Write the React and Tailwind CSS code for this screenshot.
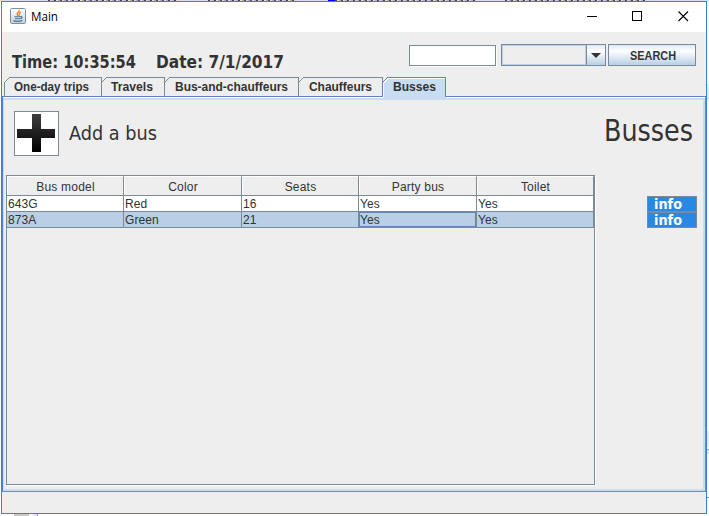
import React from "react";

const ui = "font-['Liberation_Sans',Arial,sans-serif]";
const tahoma = "font-['DejaVu_Sans_Condensed','DejaVu_Sans',sans-serif]";

const tabs = [
  { label: "One-day trips", width: 97, pad: 10, text: 75 },
  { label: "Travels", width: 63, pad: 10, text: 42 },
  { label: "Bus-and-chauffeurs", width: 134, pad: 11, text: 113 },
  { label: "Chauffeurs", width: 84, pad: 11, text: 63 },
  { label: "Busses", width: 64, pad: 11, text: 43, active: true },
];

const columns = [
  { label: "Bus model", width: 117 },
  { label: "Color", width: 118 },
  { label: "Seats", width: 117 },
  { label: "Party bus", width: 118 },
  { label: "Toilet", width: 117 },
];

const rows = [
  ["643G", "Red", "16", "Yes", "Yes"],
  ["873A", "Green", "21", "Yes", "Yes"],
];

// A single line of text fitted to a given advance width.
function Fit({ children, width, size, className = "", bold, fill = "#333333", height }) {
  const h = height || Math.ceil(size * 1.4);
  return (
    <svg width={width + 4} height={h} className={`block shrink-0 overflow-visible ${className}`}>
      <text x="0" y={Math.round(size * 1.05)} fontSize={size} fontWeight={bold ? 700 : 400} fill={fill} textLength={width} lengthAdjust="spacingAndGlyphs">
        {children}
      </text>
    </svg>
  );
}

function Tab({ label, width, pad, text, active }) {
  return (
    <div className="relative h-[20px] shrink-0" style={{ width }}>
      <svg width={width + 1} height="21" className="absolute left-0 top-0 overflow-visible" shapeRendering="crispEdges">
        {active && <path d={`M1 22V7L7 1H${width}V22Z`} fill="#c8ddf2" />}
        {active && <path d={`M1.5 20V6.5L6.5 1.5H${width - 1}`} fill="none" stroke="#ffffff" />}
        <path d={`M0.5 19V5.5L5.5 0.5H${width + 0.5 - (active ? 1 : 0)}V20`} fill="none" stroke={active ? "#6382bf" : "#7a8a99"} />
      </svg>
      <div className="relative pt-[1px]" style={{ paddingLeft: pad }}>
        <Fit width={text} size={12} bold className={ui}>{label}</Fit>
      </div>
    </div>
  );
}

function JavaIcon() {
  return (
    <svg width="16" height="16" viewBox="0 0 16 16" className="mt-[6px] ml-2 block shrink-0">
      <defs>
        <linearGradient id="jg" x2="0" y2="1">
          <stop stopColor="#ffffff" />
          <stop offset="1" stopColor="#c5cfd8" />
        </linearGradient>
      </defs>
      <rect x=".5" y=".5" width="15" height="15" rx="1" fill="url(#jg)" stroke="#7890a4" />
      <path d="M9.2 2C10 4.2 6 4.8 7.2 6.4L8.2 8M11 4.2C8.2 5.3 10 6 8.8 7.8" fill="none" stroke="#e98324" strokeWidth="1.3" />
      <path d="M4.5 8.7H10.5M5 10.7H10M10.5 8.8c2.2-.8 2.2 1.4 0 1.9M3.5 12.5C5 13.7 10.5 13.6 12.3 12.2" fill="none" stroke="#456f96" strokeWidth="1.1" />
    </svg>
  );
}

function TitleBar() {
  return (
    <div className="flex h-[30px] shrink-0 bg-white">
      <JavaIcon />
      <Fit width={27} size={12} fill="#000" className="ml-[5px] mt-[6px] font-['Open_Sans','Noto_Sans',sans-serif]">Main</Fit>
      <svg width="102" height="12" className="mt-[8px] ml-auto mr-[17px]" fill="none" stroke="#000">
        <path d="M0 6.5H10M45.5 1.5H54.5V10.5H45.5Z" shapeRendering="crispEdges" />
        <path d="M91.5 1.5L101 11M101 1.5L91.5 11" strokeWidth="1.1" />
      </svg>
    </div>
  );
}

function Toolbar() {
  return (
    <div className="flex h-[45px] shrink-0">
      <div className="flex pt-[18px] pl-[10px]">
        <Fit width={124} size={17} bold className={tahoma}>Time: 10:35:54</Fit>
        <Fit width={128} size={17} bold className={`${tahoma} ml-[16px]`}>Date: 7/1/2017</Fit>
      </div>
      <div className="ml-auto mr-[10px] flex pt-[12px]">
        <div className="mt-[1px] h-[21px] w-[87px] border border-[#7a8a99] bg-white shadow-[1px_1px_0_#fff]" />
        <div className="ml-[5px] flex h-[22px] w-[105px] border border-[#7a8a99]">
          <div className="w-[84px] border border-[#b8cfe5] bg-[#eeeeee]" />
          <div className="flex grow items-center justify-center border-l border-[#7a8a99] bg-linear-to-b from-[#dde8f3] via-white via-30% to-[#b8cfe5]">
            <svg width="10" height="5"><path d="M0 0H10L5 5Z" fill="#333" /></svg>
          </div>
        </div>
        <div className="ml-[2px] h-[22px] w-[88px] border border-[#7a8a99] bg-linear-to-b from-[#dde8f3] via-white via-30% to-[#b8cfe5] pt-[2px] pl-[21px]">
          <Fit width={46} size={12} bold className={ui}>SEARCH</Fit>
        </div>
      </div>
    </div>
  );
}

function BusTable() {
  return (
    <div className={`${ui} flex h-[310px] w-[589px] flex-col border border-[#7a8a99] text-[12px] text-[#333] shadow-[1px_1px_0_#fff]`}>
      <div className="flex h-[20px] shrink-0 border-b border-[#7a8a99]">
        {columns.map((c) => (
          <div key={c.label} className="shrink-0 border-t border-r border-l border-t-white border-r-[#7a8a99] border-l-white pt-[2px] text-center leading-[16px] tracking-[0.2px]" style={{ width: c.width }}>
            {c.label}
          </div>
        ))}
      </div>
      {rows.map((row, r) => (
        <div key={row[0]} className={`flex h-[16px] shrink-0 border-b border-[#7a8a99] ${r === 1 ? "bg-[#b8cfe5]" : "bg-white"}`}>
          {row.map((cell, i) => (
            <div
              key={i}
              className={`shrink-0 border-r border-[#7a8a99] pl-[1px] leading-[17px] tracking-[0.1px] ${r === 1 && i === 3 ? "shadow-[inset_0_0_0_1px_#6382bf]" : ""}`}
              style={{ width: columns[i].width }}
            >
              {cell}
            </div>
          ))}
        </div>
      ))}
    </div>
  );
}

function InfoButton() {
  return (
    <div className="h-[16px] w-[50px] border border-[#7a8a99] bg-[#2988e3] pl-[6px]">
      <Fit width={28} size={13.5} bold height={14} fill="#fff" className={`${tahoma} -mt-[2px]`}>info</Fit>
    </div>
  );
}

function BussesPanel() {
  return (
    <div className="h-[396px] w-[704px] shrink-0 border border-[#6382bf] border-l-[#4f80d6] border-r-[#7a8a99] border-b-[#7a8a99]">
      <div className="h-full border-t border-l border-t-white border-l-[#c8ddf2]">
        <div className="h-full border-2 border-l-0 border-[#c8ddf2] pl-[2px]">
          <div className="flex h-[75px] pt-[11px] pl-[8px]">
            <div className="h-[45px] w-[45px] border border-[#7a8a99] bg-white p-[2px]">
              <svg width="39" height="39" className="block">
                <defs>
                  <linearGradient id="plus" x2="0" y2="1">
                    <stop stopColor="#3e3e3e" />
                    <stop offset="1" stopColor="#000" />
                  </linearGradient>
                </defs>
                <path d="M15 0H24V15H38V24H24V38H15V24H0V15H15Z" fill="url(#plus)" />
              </svg>
            </div>
            <Fit width={88} size={19.5} className={`${tahoma} mt-[9px] ml-[10px]`}>Add a bus</Fit>
            <Fit width={89} size={30} className={`${tahoma} -mt-[2px] mr-[6px] ml-auto`}>Busses</Fit>
          </div>
          <div className="flex">
            <BusTable />
            <div className="mt-[21px] ml-[52px]">
              <InfoButton />
              <InfoButton />
            </div>
          </div>
        </div>
      </div>
    </div>
  );
}

// Slivers of the windows behind this one.
function TopSliver() {
  return (
    <div className="flex h-px w-[709px] bg-[#d5deea]">
      <div className="ml-[48px] w-[130px] bg-[repeating-linear-gradient(90deg,#4a4a5a_0_2px,#e8d9c0_2px_4px,#9fb4d0_4px_6px)]" />
      <div className="ml-[30px] w-[88px] bg-[repeating-linear-gradient(90deg,#4a4a5a_0_2px,#e8d9c0_2px_4px,#9fb4d0_4px_6px)]" />
      <div className="ml-[32px] w-[7px] bg-[#0000ff]" />
      <div className="w-[142px] bg-[repeating-linear-gradient(90deg,#4a4a5a_0_2px,#e8d9c0_2px_4px,#9fb4d0_4px_6px)]" />
      <div className="ml-[28px] w-[140px] bg-[repeating-linear-gradient(90deg,#4a4a5a_0_2px,#e8d9c0_2px_4px,#9fb4d0_4px_6px)]" />
    </div>
  );
}

function RightSliver() {
  return (
    <div className="w-[2px]">
      <div className="mt-[83px] h-[17px] bg-[#e3edfa]" />
      <div className="mt-[330px] h-[16px] bg-[#ececf2]" />
      <div className="mt-[2px] h-px bg-[#9aa8c0]" />
      <div className="h-[4px] bg-[#e0e6f4]" />
      <div className="mt-[43px] h-px bg-[#8f9098]" />
    </div>
  );
}

export default function App() {
  return (
    <div className="h-[516px] w-[709px] overflow-hidden bg-white">
      <TopSliver />
      <div className="flex h-[513px] pl-px">
        <div className="flex h-[513px] w-[706px] shrink-0 flex-col border border-[#3b7de0] bg-[#eeeeee]">
          <TitleBar />
          <Toolbar />
          <div className="flex h-[19px] shrink-0 pl-[2px]">
            {tabs.map((t) => <Tab key={t.label} {...t} />)}
          </div>
          <BussesPanel />
        </div>
        <RightSliver />
      </div>
      <div className="flex h-[2px] pl-[14px]">
        <div className="w-[15px] bg-[#c8c8c8]" />
        <div className="ml-[4px] w-[4px] bg-[#dfe3f3]" />
        <div className="w-px bg-[#9a9aa8]" />
      </div>
    </div>
  );
}
